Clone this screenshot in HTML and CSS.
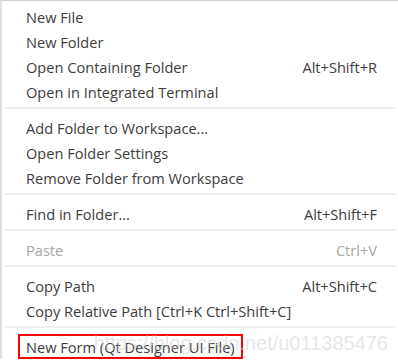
FILE: index.html
```html
<!DOCTYPE html>
<html lang="en">
<head>
    <meta charset="UTF-8">
    <title>Explorer context menu</title>
    <link rel="stylesheet" href="styles.css">
</head>
<body>
    <div class="menu">
        <div class="item"><span>New File</span></div>
        <div class="item"><span>New Folder</span></div>
        <div class="item"><span>Open Containing Folder</span><span class="key">Alt+Shift+R</span></div>
        <div class="item"><span>Open in Integrated Terminal</span></div>
        <div class="sep"></div>
        <div class="item"><span>Add Folder to Workspace...</span></div>
        <div class="item"><span>Open Folder Settings</span></div>
        <div class="item"><span>Remove Folder from Workspace</span></div>
        <div class="sep"></div>
        <div class="item"><span>Find in Folder...</span><span class="key">Alt+Shift+F</span></div>
        <div class="sep"></div>
        <div class="item disabled"><span>Paste</span><span class="key">Ctrl+V</span></div>
        <div class="sep"></div>
        <div class="item"><span>Copy Path</span><span class="key">Alt+Shift+C</span></div>
        <div class="item"><span>Copy Relative Path [Ctrl+K Ctrl+Shift+C]</span></div>
        <div class="sep"></div>
        <div class="item marked"><span class="box">New Form (Qt Designer UI File)</span></div>
    </div>
    <div class="watermark">https://blog.csdn.net/u011385476</div>
</body>
</html>
```

FILE: styles.css
```css
body {
    margin: 0;
    background: #fff;
    font-family: "Open Sans", "DejaVu Sans", sans-serif;
    font-size: 14.6px;
    color: #3c3c3c;
    position: relative;
    height: 362px;
    overflow: hidden;
}
.menu {
    border-top: 1px solid #d4d4d4;
    border-left: 2px solid #e0e0e0;
    padding-top: 3px;
}
.item {
    display: flex;
    justify-content: space-between;
    align-items: center;
    height: 25px;
    padding: 0 21px 0 24px;
    white-space: nowrap;
}
.disabled {
    color: #a6a6a6;
}
.sep {
    height: 2px;
    margin: 3px 3px 6px 3px;
    background: #efefef;
}
.marked {
    padding-left: 16px;
}
.box {
    display: flex;
    align-items: center;
    height: 21px;
    padding: 0 6px 0 6px;
    border: 2px solid #f00;
}
.watermark {
    position: absolute;
    right: 10px;
    top: 332px;
    font-family: "Liberation Sans", Arial, sans-serif;
    font-size: 20px;
    color: rgba(200, 200, 200, 0.45);
    pointer-events: none;
}
```
